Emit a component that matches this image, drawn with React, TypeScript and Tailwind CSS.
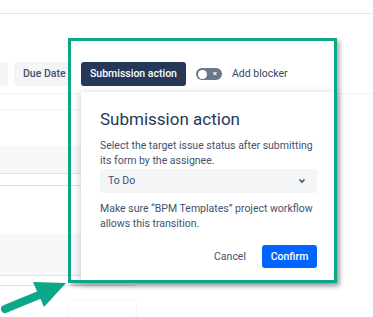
import React from "react";

const Toggle = () => (
  <div className="flex h-[12px] w-[26px] items-center justify-between rounded-full bg-[#6b778c] px-[2px]">
    <span className="h-[9px] w-[9px] rounded-full bg-white" />
    <span className="pr-[3px] text-[8px] font-bold leading-none text-white">×</span>
  </div>
);

const Arrow = () => (
  <svg className="absolute left-0 top-[278px]" width="72" height="39" viewBox="0 278 72 39">
    <line x1="5" y1="309" x2="44" y2="293" stroke="#0ca789" strokeWidth="8" strokeLinecap="round" />
    <polygon points="66,283 33,282 44,307" fill="#0ca789" />
  </svg>
);

const App = () => {
  return (
    <div
      className="relative h-[317px] w-[373px] overflow-hidden bg-white text-[#42526e]"
      style={{ fontFamily: "Roboto, 'Liberation Sans', sans-serif" }}
    >
      {/* page header line */}
      <div className="h-[14px] border-b border-[#e4e6ea]" />

      {/* toolbar */}
      <div className="mt-[48px] border-b border-[#f0f1f3] pb-[7px]">
        <div className="flex h-[24px] items-center">
          <div className="h-full w-[8px] rounded-r-[3px] bg-[#f4f5f7]" />
          <div className="ml-[6px] flex h-full w-[56px] items-center rounded-[3px] bg-[#f4f5f7] pl-[9px] text-[10.5px] font-medium text-[#42526e]">
            Due Date
          </div>
          <div className="ml-[11px] flex h-full items-center rounded-[3px] bg-[#253858] px-[9px] text-[10.5px] font-medium text-white">
            Submission action
          </div>
          <div className="ml-[10px]">
            <Toggle />
          </div>
          <span className="ml-[10px] text-[10.5px] text-[#344563]">Add blocker</span>
        </div>
      </div>

      {/* table behind the popup */}
      <div className="w-[135px]">
        <div className="h-[16px] border-b border-[#f1f2f4]" />
        <div className="h-[36px]" />
        <div className="h-[28px] border-b border-[#dfe1e6] bg-[#f7f8f9]" />
        <div className="h-[12px] border-b border-[#dfe1e6]" />
        <div className="h-[48px]" />
        <div className="h-[42px] border-b border-[#dfe1e6] bg-[#f7f8f9]" />
        <div className="h-[10px] border-b border-[#dfe1e6]" />
        <div className="ml-[67px] mt-[14px] h-[20px] w-[70px] rounded-[4px] border border-[#f6f7f8]" />
      </div>

      {/* popup */}
      <div className="absolute left-[81px] top-[92px] h-[190px] w-[255px] bg-white px-[19px] pt-[17px] shadow-[0_2px_8px_rgba(9,30,66,0.25)]">
        <h3 className="text-[17px] font-normal leading-[20px] text-[#253858]">Submission action</h3>
        <p className="mt-[9px] text-[10.5px] leading-[15px]">
          Select the target issue status after submitting its form by the assignee.
        </p>
        <div className="mt-[1px] flex h-[24px] w-[217px] items-center justify-between rounded-[3px] bg-[#f4f5f7] pl-[8px] pr-[11px] text-[10.5px]">
          <span>To Do</span>
          <svg width="8" height="6" viewBox="0 0 8 6">
            <path d="M1.5 1.5 L4 4 L6.5 1.5" stroke="#42526e" strokeWidth="1.6" fill="none" />
          </svg>
        </div>
        <p className="mt-[8px] text-[10.5px] leading-[15px]">
          Make sure “BPM Templates” project workflow allows this transition.
        </p>
        <div className="mt-[14px] flex w-[217px] items-center justify-end">
          <span className="mr-[16px] text-[10.5px]">Cancel</span>
          <div className="flex h-[23px] w-[55px] items-center justify-center rounded-[3px] bg-[#0065ff] text-[10.5px] font-medium text-white">
            Confirm
          </div>
        </div>
      </div>

      {/* annotation */}
      <div className="absolute left-[68px] top-[38px] h-[245px] w-[269px] border-[3px] border-[#0ca789] shadow-[3px_3px_4px_rgba(0,0,0,0.3)]" />
      <Arrow />
    </div>
  );
};

export default App;
